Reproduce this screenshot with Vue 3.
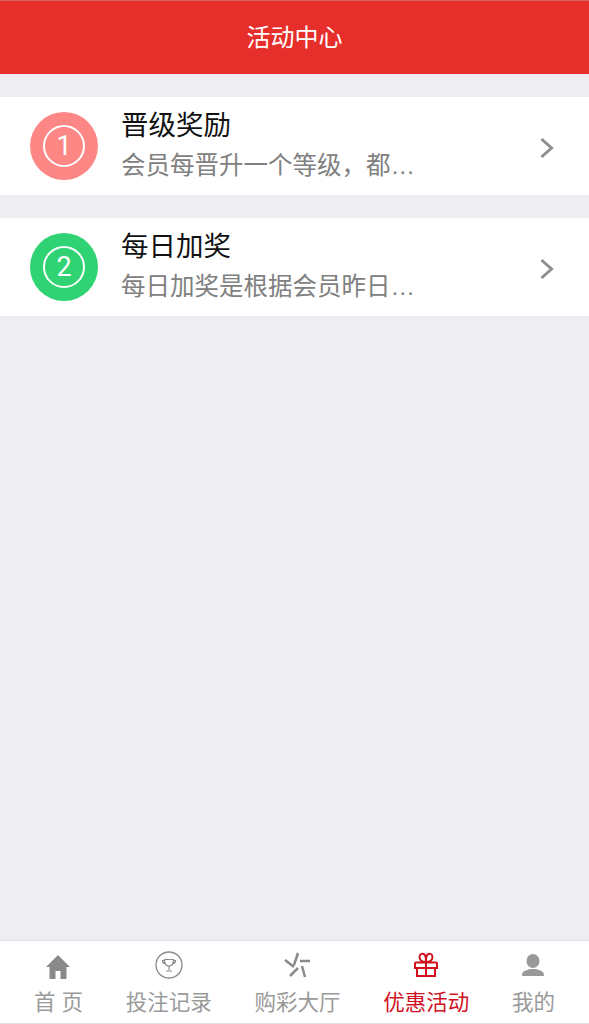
<script setup>
const items = [
  { no: 1, title: '晋级奖励', desc: '会员每晋升一个等级，都…', color: '#fd8785' },
  { no: 2, title: '每日加奖', desc: '每日加奖是根据会员昨日…', color: '#2fd373' }
]
</script>

<template>
  <div class="page">
    <header class="top">活动中心</header>

    <main class="list">
      <div class="row" v-for="item in items" :key="item.no">
        <div class="badge" :style="{ background: item.color }">
          <span class="ring">{{ item.no }}</span>
        </div>
        <div class="body">
          <div class="title">{{ item.title }}</div>
          <div class="desc">{{ item.desc }}</div>
        </div>
        <svg class="arrow" width="16" height="24" viewBox="0 0 16 24">
          <path d="M2.500 3l10 9-10 9" fill="none" stroke="#8e8e8e" stroke-width="3" />
        </svg>
      </div>
    </main>

    <nav class="tabs">
      <div class="tab">
        <svg width="26" height="28" viewBox="0 0 26 28">
          <path d="M13 4L1 16H4.500V28H10.500V20H15.500V28H21.500V16H25Z" fill="#8a8a8a" />
        </svg>
        <span>首 页</span>
      </div>
      <div class="tab">
        <svg width="28" height="28" viewBox="0 0 28 28">
          <circle cx="14" cy="14" r="13" fill="none" stroke="#8a8a8a" stroke-width="1.300" />
          <path d="M9.500 8.500h9c0 4-1.500 6.500-4.500 6.500s-4.500-2.500-4.500-6.500zM14 15v4M11 20h6M9.500 9.500H7.500c0 2 1 3 2.700 3.300M18.500 9.500h2c0 2-1 3-2.700 3.300" fill="none" stroke="#8a8a8a" stroke-width="1.200" />
        </svg>
        <span>投注记录</span>
      </div>
      <div class="tab">
        <svg width="28" height="28" viewBox="0 0 28 28">
          <path d="M15 2L11 14M17 10H27M19 15L22 26M15 17L7 25M2 9L11 16" fill="none" stroke="#8a8a8a" stroke-width="2.500" />
        </svg>
        <span>购彩大厅</span>
      </div>
      <div class="tab active">
        <svg width="26" height="28" viewBox="0 0 26 28">
          <path d="M3 11.500h20a1 1 0 0 1 1 1V17H2v-4.500a1 1 0 0 1 1-1zM4 17h18V25H4zM13 11.500V25M13 11C10 11 6.500 9.500 6.500 6s3.500-4 5-2.500S13 8 13 11zM13 11c3 0 6.500-1.500 6.500-5s-3.500-4-5-2.500S13 8 13 11z" fill="none" stroke="#d0121f" stroke-width="2" />
        </svg>
        <span>优惠活动</span>
      </div>
      <div class="tab">
        <svg width="24" height="28" viewBox="0 0 24 28">
          <ellipse cx="12" cy="10" rx="6.500" ry="7" fill="#999" />
          <path d="M1 24c0-4 4-4.500 8-6h6c4 1.500 8 2 8 6 0 .8-.5 1-1 1H2c-.5 0-1-.2-1-1z" fill="#999" />
        </svg>
        <span>我的</span>
      </div>
    </nav>
  </div>
</template>

<style>
body {
  background: #eeeef2;
}
</style>

<style scoped>
.page {
  height: 1024px;
  display: flex;
  flex-direction: column;
  background: #eeeef2;
  font-family: "Liberation Sans", "Noto Sans CJK SC", sans-serif;
}
.top {
  height: 74px;
  box-sizing: border-box;
  line-height: 74px;
  flex: none;
  text-align: center;
  font-size: 24px;
  color: #fff;
  background: #e62e2a;
  border-top: 1px solid #d9605c;
}
.list {
  flex: 1;
  display: flex;
  flex-direction: column;
  gap: 23px;
  padding-top: 23px;
}
.row {
  height: 98px;
  display: flex;
  align-items: center;
  padding: 0 34px 0 30px;
  background: #fff;
}
.badge {
  width: 68px;
  height: 68px;
  flex: none;
  display: flex;
  align-items: center;
  justify-content: center;
  border-radius: 50%;
}
.ring {
  width: 38px;
  height: 38px;
  line-height: 38px;
  text-align: center;
  border: 2px solid #fff;
  border-radius: 50%;
  color: #fff;
  font-family: Roboto, sans-serif;
  font-weight: 400;
  font-size: 27px;
}
.body {
  flex: 1;
  margin-left: 23px;
  padding-bottom: 3px;
}
.title {
  font-size: 27.500px;
  line-height: 36px;
  color: #111;
}
.desc {
  margin-top: 6px;
  font-size: 24.500px;
  line-height: 32px;
  color: #808080;
}
.arrow {
  flex: none;
  margin-top: 3px;
}
.tabs {
  height: 84px;
  flex: none;
  box-sizing: border-box;
  display: flex;
  justify-content: space-between;
  padding: 10px 34px 0;
  background: #fff;
  border-top: 1px solid #e2e2e2;
  border-bottom: 1px solid #e2e2e2;
}
.tab {
  display: flex;
  flex-direction: column;
  align-items: center;
  gap: 10px;
  font-size: 21.500px;
  line-height: 28px;
  color: #9a9a9a;
}
.tab.active {
  color: #d0121f;
}
</style>
